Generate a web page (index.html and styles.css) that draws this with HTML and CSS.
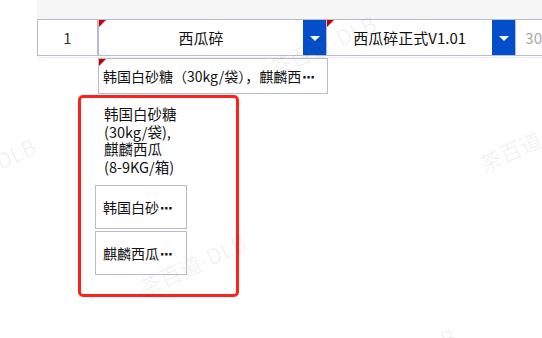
FILE: index.html
```html
<!DOCTYPE html>
<html lang="zh-CN">
  <head>
    <meta charset="UTF-8" />
    <meta name="viewport" content="width=device-width, initial-scale=1.0" />
    <title>配方选择</title>
    <link rel="stylesheet" href="styles.css">
  </head>
  <body>
    <div class="page">
      <div class="head-strip"></div>

      <div class="grid-row">
        <div class="cell cell-index">1</div>
        <div class="cell cell-select cell-name">
          <span class="mark"></span>
          <span class="cell-text">西瓜碎</span>
          <span class="drop-btn"><span class="caret"></span></span>
        </div>
        <div class="cell cell-select cell-recipe">
          <span class="mark"></span>
          <span class="cell-text">西瓜碎正式V1.01</span>
          <span class="drop-btn"><span class="caret"></span></span>
        </div>
        <div class="cell cell-qty">30</div>
      </div>
      <div class="next-line"></div>

      <!-- materials cell of the next row, shortened text -->
      <div class="material-cell" title="韩国白砂糖（30kg/袋），麒麟西瓜（8-9KG/箱）">
        <span class="mark"></span>
        <span class="material-text">韩国白砂糖（30kg/袋），麒麟西<span class="dots">⋯</span></span>
      </div>

      <!-- hover popup with full text and split items -->
      <div class="material-pop">
        <div class="pop-full">
          韩国白砂糖<span class="nb">(30kg/袋),</span>麒麟西瓜<span class="nb">(8-9KG/箱)</span>
        </div>
        <div class="pop-items">
          <div class="pop-item" title="韩国白砂糖（30kg/袋）">韩国白砂<span class="dots">⋯</span></div>
          <div class="pop-item" title="麒麟西瓜（8-9KG/箱）">麒麟西瓜<span class="dots">⋯</span></div>
        </div>
      </div>

      <div class="watermarks">
        <span class="wm wm-a">茶百道-DLB</span>
        <span class="wm wm-b">茶百道-DLB</span>
        <span class="wm wm-c">茶百道-DLB</span>
        <span class="wm wm-d">茶百道-DLB</span>
        <span class="wm wm-e">茶百道-DLB</span>
      </div>
    </div>
  </body>
</html>
```

FILE: styles.css
```css
body {
  font-family: "Noto Sans CJK SC", "Microsoft YaHei", sans-serif;
  background-color: #fff;
  margin: 0;
  padding: 0;
  color: #111;
  font-size: 14px;
}

.page {
  position: relative;
  width: 542px;
  height: 338px;
  overflow: hidden;
}

.head-strip {
  height: 19px;
  margin-left: 37px;
  background-color: #f6f6f7;
}

.grid-row {
  display: flex;
  height: 35px;
  margin-left: 37px;
  border-top: 1px solid #b9bccb;
  border-bottom: 1px solid #b9bccb;
  font-size: 15px;
}

.cell {
  position: relative;
  display: flex;
  align-items: center;
  justify-content: center;
  box-sizing: border-box;
}

.cell-index {
  width: 62px;
  border-left: 1px solid #b9bccb;
  border-right: 2px solid #b9bccb;
  color: #333;
}

.cell-select {
  border-right: 1px solid #b9bccb;
}

.cell-name {
  width: 229px;
}

.cell-recipe {
  width: 190px;
}

.cell-text {
  flex: 1;
  text-align: center;
  white-space: nowrap;
}

.drop-btn {
  width: 23px;
  align-self: stretch;
  background-color: #034ec9;
  display: flex;
  align-items: center;
  justify-content: center;
}

.caret {
  width: 0;
  height: 0;
  border-left: 5px solid transparent;
  border-right: 5px solid transparent;
  border-top: 5px solid #fff;
  margin-top: 1px;
}

.mark {
  position: absolute;
  top: 0;
  left: 0;
  width: 0;
  height: 0;
  border-top: 7px solid #c8000a;
  border-right: 7px solid transparent;
}

.cell-qty {
  flex: 1;
  justify-content: flex-start;
  padding-left: 9px;
  color: #a8a8a8;
}

.next-line {
  height: 1px;
  margin-top: 1px;
  margin-left: 37px;
  background-color: #ececf0;
}

.material-cell {
  position: absolute;
  left: 98px;
  top: 58px;
  width: 230px;
  height: 36px;
  box-sizing: border-box;
  border: 1px solid #b9bccb;
  background-color: #fff;
  display: flex;
  align-items: center;
  padding: 0 2px 0 4px;
}

.material-text {
  white-space: nowrap;
}

.dots {
  font-family: "DejaVu Sans", sans-serif;
  font-weight: bold;
  font-size: 13px;
  margin-left: 1px;
}

.material-pop {
  position: absolute;
  left: 78px;
  top: 95px;
  width: 161px;
  height: 202px;
  box-sizing: border-box;
  border: 3px solid #ff2119;
  border-radius: 5px;
  padding: 7px 0 0 14px;
  background-color: #fff;
}

.pop-full {
  width: 76px;
  padding-left: 9px;
  font-size: 14.5px;
  line-height: 17.5px;
}

.nb {
  white-space: nowrap;
}

.pop-items {
  display: flex;
  flex-direction: column;
  gap: 2px;
  margin-top: 10px;
}

.pop-item {
  width: 92px;
  height: 44px;
  box-sizing: border-box;
  border: 1px solid #b9bccb;
  padding: 0 4px 0 7px;
  line-height: 42px;
  white-space: nowrap;
}

.watermarks {
  position: absolute;
  inset: 0;
  pointer-events: none;
}

.wm {
  position: absolute;
  width: 140px;
  margin-left: -70px;
  margin-top: -14px;
  text-align: center;
  font-size: 22px;
  line-height: 28px;
  color: rgba(0, 0, 0, 0.06);
  transform: rotate(-25deg);
  white-space: nowrap;
}

.wm-a { left: 322px; top: 45px; }
.wm-b { left: 192px; top: 264px; }
.wm-c { left: 532px; top: 140px; }
.wm-d { left: -18px; top: 168px; }
.wm-e { left: 402px; top: 358px; }
```
